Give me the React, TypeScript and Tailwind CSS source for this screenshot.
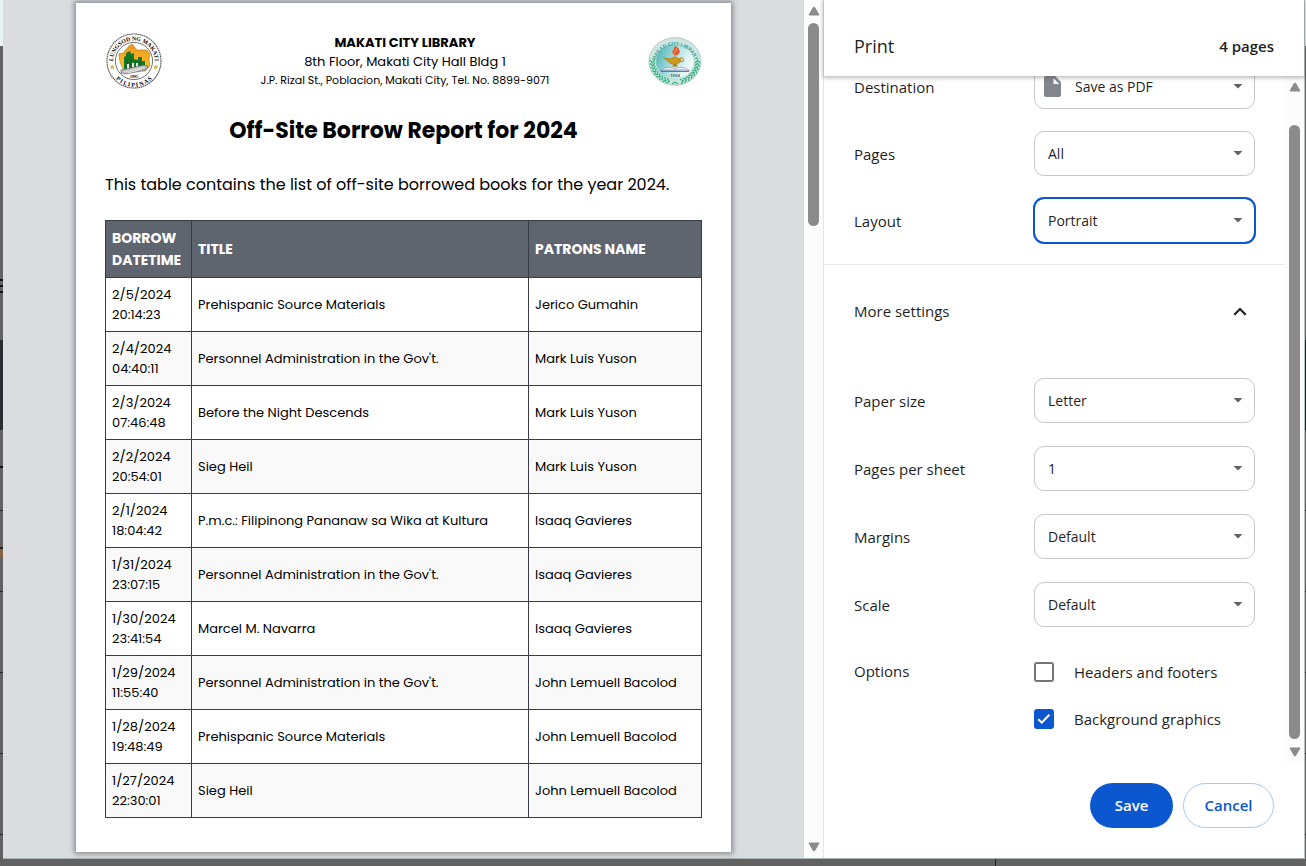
import React, { useState } from "react";

type Borrow = { date: string; time: string; title: string; patron: string };

const borrows: Borrow[] = [
  { date: "2/5/2024", time: "20:14:23", title: "Prehispanic Source Materials", patron: "Jerico Gumahin" },
  { date: "2/4/2024", time: "04:40:11", title: "Personnel Administration in the Gov't.", patron: "Mark Luis Yuson" },
  { date: "2/3/2024", time: "07:46:48", title: "Before the Night Descends", patron: "Mark Luis Yuson" },
  { date: "2/2/2024", time: "20:54:01", title: "Sieg Heil", patron: "Mark Luis Yuson" },
  { date: "2/1/2024", time: "18:04:42", title: "P.m.c.: Filipinong Pananaw sa Wika at Kultura", patron: "Isaaq Gavieres" },
  { date: "1/31/2024", time: "23:07:15", title: "Personnel Administration in the Gov't.", patron: "Isaaq Gavieres" },
  { date: "1/30/2024", time: "23:41:54", title: "Marcel M. Navarra", patron: "Isaaq Gavieres" },
  { date: "1/29/2024", time: "11:55:40", title: "Personnel Administration in the Gov't.", patron: "John Lemuell Bacolod" },
  { date: "1/28/2024", time: "19:48:49", title: "Prehispanic Source Materials", patron: "John Lemuell Bacolod" },
  { date: "1/27/2024", time: "22:30:01", title: "Sieg Heil", patron: "John Lemuell Bacolod" },
];

function CitySeal() {
  return (
    <svg viewBox="-1 0 57 57" className="size-[57px] shrink-0" role="img" aria-label="City seal">
      <defs>
        <path id="seal-top" d="M7.2 31.5A21 21 0 1 1 48.8 31.5" />
        <path id="seal-bottom" d="M3.6 33A24.7 24.7 0 0 0 52.4 33" />
        <linearGradient id="seal-land" x1="0" y1="0" x2="0" y2="1">
          <stop offset="0" stopColor="#f0941c" />
          <stop offset="1" stopColor="#fcca2c" />
        </linearGradient>
      </defs>
      <circle cx="28" cy="28" r="27" fill="#fff" stroke="#555" strokeWidth="1.1" strokeDasharray="1.6 .5" />
      <circle cx="28" cy="28" r="18.6" fill="#fff" stroke="#333" strokeWidth=".7" />
      <path d="M13 21l4-1 6-7 3-2 5 6 10 0 3 4-1 5 1 7-5 5-21 0-4-9-1-6z" fill="url(#seal-land)" stroke="#8b6a20" strokeWidth=".5" />
      <path d="M18 24l2-1v-3l4-2 1 3 3-1v6l4 1v-3l4 0v4l3 0v6l-21 3z" fill="#147a2a" />
      <path d="M21 26v10M25 24v12M30 28v8M34 28v7" stroke="#0a4a16" strokeWidth=".8" />
      <path d="M21 31h2v6h-2zM26 30h2v6h-2zM30 30h2v5h-2z" fill="#f2f2ea" />
      <path d="M15 37l23-5 4 1-2 4-20 4-5-1z" fill="#bbb" stroke="#555" strokeWidth=".6" />
      <path d="M18 39l21-5M22 40l14-4" stroke="#eee" strokeWidth=".8" />
      <path d="M6.3 32.2l.6 1.2 1.3.1-1 .9.3 1.3-1.2-.7-1.2.7.3-1.3-1-.9 1.3-.1zM49.7 32.2l.6 1.2 1.3.1-1 .9.3 1.3-1.2-.7-1.2.7.3-1.3-1-.9 1.3-.1z" fill="#e5c22f" stroke="#b9961c" strokeWidth=".5" />
      <text fontSize="4" fontWeight="700" textAnchor="middle" x="28" y="44.6" fontFamily="Liberation Serif, serif">1995</text>
      <text fontSize="5.8" fontWeight="700" textAnchor="middle" fontFamily="Liberation Serif, serif">
        <textPath href="#seal-top" startOffset="50%">LUNGSOD NG MAKATI</textPath>
      </text>
      <text fontSize="6" fontWeight="700" textAnchor="middle" fontFamily="Liberation Serif, serif">
        <textPath href="#seal-bottom" startOffset="50%">P I L I P I N A S</textPath>
      </text>
    </svg>
  );
}

// Leaf positions follow the lower rim of the badge, as angles in degrees.
const leafAngles = [0, 9, 18, 27, 36, 45, 54, 63, 72];

function LibrarySeal() {
  const leaves = leafAngles.flatMap((a) => [a, 180 - a]);
  return (
    <svg viewBox="0 0 54 50" className="h-[50px] w-[54px] shrink-0" role="img" aria-label="Library seal">
      <defs>
        <path id="lib-top" d="M7.2 23A20.4 19.3 0 0 1 46.8 23" />
        <linearGradient id="lib-disc" x1="0" y1="0" x2="1" y2=".4">
          <stop offset="0" stopColor="#3fadae" />
          <stop offset=".6" stopColor="#b5e3e3" />
          <stop offset="1" stopColor="#f4fbfb" />
        </linearGradient>
      </defs>
      <ellipse cx="27" cy="24.5" rx="26" ry="23.8" fill="#cde6e2" stroke="#b9c8c6" strokeWidth="1" />
      <ellipse cx="27" cy="24.5" rx="19" ry="17.6" fill="url(#lib-disc)" stroke="#8fcfcb" strokeWidth=".5" />
      {leaves.map((a) => {
        const r = (a * Math.PI) / 180;
        const x = 27 + 22.6 * Math.cos(r);
        const y = 24.5 + 20.6 * Math.sin(r);
        return (
          <g key={a} transform={`translate(${x} ${y}) rotate(${a})`}>
            <path d="M-2.4 1.5L0 -1.3L2.4 1.5" fill="none" stroke="#35b380" strokeWidth="1.3" />
          </g>
        );
      })}
      <path d="M24 47l3-1.8 3 1.8" fill="none" stroke="#35b380" strokeWidth="1.1" />
      <path d="M27 18.5c-4-2-3-5-1-6-1-2 1-3 2-4 0 2 3 2 3 4s1 1 1 1c0 3-2 5-5 5z" fill="#df5f33" />
      <path d="M26 17c0-3 3-3 3-6" fill="none" stroke="#f7a36f" strokeWidth=".8" />
      <path d="M15 20.5c4 1 6 1 8 1l4-2 4 2 2 1c0 3-3 4-4 5h-4c-4-1-5-4-10-7z" fill="#cf9a1c" stroke="#946808" strokeWidth=".4" />
      <circle cx="33.5" cy="22.8" r="2" fill="none" stroke="#b78212" strokeWidth="1" />
      <path d="M24 29.5l3-2.5 3 2.5z" fill="#a5700d" />
      <path d="M12.5 33.5c6-4 11-4 14.500-1 4-3 9-3 14.500 1-6-1-11-1-14.500 0-4-1-9-1-14.500 0z" fill="#f5f3fb" stroke="#7b6fa8" strokeWidth=".5" />
      <path d="M13 34.300h28" stroke="#4c62ad" strokeWidth="1.1" />
      <text x="27" y="40" fontSize="4.300" fontWeight="700" textAnchor="middle" fill="#50686b" fontFamily="Liberation Sans, sans-serif">1994</text>
      <text fontSize="4.800" fontWeight="700" textAnchor="middle" fill="#3a9f90" fontFamily="Liberation Sans, sans-serif">
        <textPath href="#lib-top" startOffset="50%">MAKATI CITY LIBRARY</textPath>
      </text>
    </svg>
  );
}

function ScrollArrow({ down = false }: { down?: boolean }) {
  return (
    <svg viewBox="0 0 12 10" className="h-2.5 w-3 shrink-0" aria-hidden="true">
      <path
        d={down ? "M1 1h10L6.7 8.6Q6 9.5 5.3 8.6Z" : "M1 9h10L6.7 1.4Q6 .5 5.3 1.4Z"}
        fill="#8b8b8b"
        stroke="#8b8b8b"
        strokeLinejoin="round"
      />
    </svg>
  );
}

function ReportPage() {
  return (
    <article className="mx-auto mt-[3px] mb-1.5 flex w-full max-w-[655px] flex-col bg-white px-[29px] pt-[30px] pb-[34px] font-[Poppins,Inter,sans-serif] text-black shadow-[0_0_5px_2px_rgba(60,64,67,0.5)]">
      <header className="flex items-center justify-between">
        <CitySeal />
        <div className="text-center leading-[19px]">
          <p className="text-[13px] font-bold">MAKATI CITY LIBRARY</p>
          <p className="text-[13px]">8th Floor, Makati City Hall Bldg 1</p>
          <p className="text-[11px] leading-[19px]">J.P. Rizal St., Poblacion, Makati City, Tel. No. 8899-9071</p>
        </div>
        <LibrarySeal />
      </header>
      <h1 className="mt-[25px] text-center text-[22px] leading-8 font-bold">Off-Site Borrow Report for 2024</h1>
      <p className="mt-6 text-base leading-7">This table contains the list of off-site borrowed books for the year 2024.</p>
      <table className="mt-[21px] w-full table-fixed border-collapse text-left text-[13px] leading-5">
        <colgroup>
          <col className="w-[86px]" />
          <col />
          <col className="w-[173px]" />
        </colgroup>
        <thead>
          <tr className="h-[57px] bg-[#5f656f] text-sm leading-[22px] text-white">
            <th className="border border-[#393c46] px-1.5 font-bold">BORROW DATETIME</th>
            <th className="border border-[#393c46] px-1.5 font-bold">TITLE</th>
            <th className="border border-[#393c46] px-1.5 font-bold">PATRONS NAME</th>
          </tr>
        </thead>
        <tbody>
          {borrows.map((b) => (
            <tr key={b.date} className="h-[54px] even:bg-[#f9f9f9]">
              <td className="border border-[#393c46] px-1.5">
                {b.date}
                <br />
                {b.time}
              </td>
              <td className="border border-[#393c46] px-1.5">{b.title}</td>
              <td className="border border-[#393c46] px-1.5">{b.patron}</td>
            </tr>
          ))}
        </tbody>
      </table>
    </article>
  );
}

function SelectRow({
  label,
  options,
  tall = false,
  focused = false,
  icon,
}: {
  label: string;
  options: string[];
  tall?: boolean;
  focused?: boolean;
  icon?: React.ReactNode;
}) {
  const id = label.toLowerCase().replace(/ /g, "-");
  return (
    <div className={`flex items-center pr-[30px] pl-[30px] ${tall ? "h-[68px]" : "h-[67px]"}`}>
      <label htmlFor={id} className="w-[180px] shrink-0 pt-0.5">
        {label}
      </label>
      <div className="relative flex-1">
        <select
          id={id}
          className={`block h-[45px] w-full appearance-none rounded-[10px] border bg-white pr-8 text-[14px] ${icon ? "pl-10" : "pl-[13px]"} ${
            focused ? "border-[#0b57d0] outline-2 -outline-offset-1 outline-[#0b57d0]" : "border-[#c7c7c7] outline-none"
          }`}
        >
          {options.map((o) => (
            <option key={o}>{o}</option>
          ))}
        </select>
        {icon}
        <svg viewBox="0 0 10 5" className="pointer-events-none absolute top-5 right-3 h-[5px] w-2.5" aria-hidden="true">
          <path d="M.5 0h9L5 4.6z" fill="#5f6368" />
        </svg>
      </div>
    </div>
  );
}

const fileIcon = (
  <svg viewBox="0 0 17 21" className="pointer-events-none absolute top-3 left-2.5 h-[21px] w-[17px]" aria-hidden="true">
    <path d="M2 0h9l6 6v13a2 2 0 0 1-2 2H2a2 2 0 0 1-2-2V2a2 2 0 0 1 2-2zm7.500 2v6h5.700z" fill="#80868b" fillRule="evenodd" />
  </svg>
);

function Tick({ label, checked, onChange }: { label: string; checked: boolean; onChange: () => void }) {
  return (
    <label className="flex h-[47px] items-center gap-5">
      <span className="relative flex size-5 shrink-0">
        <input
          type="checkbox"
          checked={checked}
          onChange={onChange}
          className="size-5 appearance-none rounded-[3px] border-2 border-[#757575] checked:border-[#0b57d0] checked:bg-[#0b57d0]"
        />
        {checked && (
          <svg viewBox="0 0 20 20" className="pointer-events-none absolute inset-0" fill="none" stroke="#fff" strokeWidth="2" aria-hidden="true">
            <path d="M4.2 10.2l3.6 3.5 7.6-8" />
          </svg>
        )}
      </span>
      <span className="pt-0.5">{label}</span>
    </label>
  );
}

function Settings() {
  const [headers, setHeaders] = useState(false);
  const [graphics, setGraphics] = useState(true);
  return (
    <aside className="flex w-[481px] shrink-0 flex-col border-l border-[#e5e5e5] bg-white font-['Segoe_UI','Open_Sans',sans-serif] text-[15px] text-[#1f1f1f]">
      <header className="relative z-10 flex h-[76px] shrink-0 items-center justify-between bg-white px-[30px] pt-4 shadow-[0_1px_4px_1px_rgba(60,64,67,0.35)]">
        <h2 className="text-lg">Print</h2>
        <span className="font-semibold">4 pages</span>
      </header>
      <div className="flex flex-1 overflow-hidden">
        <div className="flex-1">
          <div className="-mt-[23px]">
            <SelectRow label="Destination" options={["Save as PDF"]} icon={fileIcon} />
            <SelectRow label="Pages" options={["All", "Odd pages only", "Custom"]} />
            <SelectRow label="Layout" options={["Portrait", "Landscape"]} focused />
          </div>
          <button
            type="button"
            aria-expanded="true"
            className="mt-2.5 mb-[9px] flex h-[93px] w-full items-center justify-between border-t border-[#e8e8e8] pr-[38px] pl-[30px]"
          >
            More settings
            <svg viewBox="0 0 14 9" className="h-[9px] w-3.5" fill="none" stroke="#1f1f1f" strokeWidth="2.2" aria-hidden="true">
              <path d="M1.3 7.7L7 2l5.7 5.7" />
            </svg>
          </button>
          <SelectRow label="Paper size" options={["Letter", "A4", "Legal"]} tall />
          <SelectRow label="Pages per sheet" options={["1", "2", "4"]} tall />
          <SelectRow label="Margins" options={["Default", "None", "Minimum"]} tall />
          <SelectRow label="Scale" options={["Default", "Custom"]} tall />
          <fieldset className="flex px-[30px] pt-2.5" aria-labelledby="options-title">
            <span id="options-title" className="flex h-[47px] w-[180px] shrink-0 items-center">
              Options
            </span>
            <div>
              <Tick label="Headers and footers" checked={headers} onChange={() => setHeaders(!headers)} />
              <Tick label="Background graphics" checked={graphics} onChange={() => setGraphics(!graphics)} />
            </div>
          </fieldset>
        </div>
        <div className="flex w-[19px] flex-col items-center bg-[#fcfcfc] py-1.5" aria-hidden="true">
          <ScrollArrow />
          <div className="mt-[33px] mb-2 w-[11px] flex-1 rounded-full bg-[#8b8b8b]" />
          <ScrollArrow down />
        </div>
      </div>
      <footer className="flex justify-end gap-2.5 px-[30px] pt-5 pb-[30px] text-[15px] font-semibold">
        <button type="button" className="h-[45px] w-[83px] rounded-full bg-[#0b57d0] text-white">
          Save
        </button>
        <button type="button" className="h-[45px] w-[91px] rounded-full border border-[#a8c7fa] text-[#0b57d0]">
          Cancel
        </button>
      </footer>
    </aside>
  );
}

export default function App() {
  return (
    <div className="flex min-h-screen flex-col bg-[#626262]">
      <div className="flex flex-1">
        {/* Slice of the dimmed page behind the dialog */}
        <div className="flex w-[3px] shrink-0 flex-col" aria-hidden="true">
          <div className="h-[46px] bg-[#e6f3f1]" />
          <div className="mt-[233px] h-0.5 bg-[#111]" />
          <div className="mt-1 h-0.5 bg-[#111]" />
          <div className="mt-1 h-0.5 bg-[#111]" />
          <div className="mt-[47px] h-[90px] bg-[#292c30]" />
          <div className="mt-9 h-0.5 bg-[#111]" />
          <div className="mt-[42px] h-px bg-[#222]" />
          <div className="mt-9 h-0.5 bg-[#2b2218]" />
          <div className="h-2 bg-[#866444]" />
          <div className="mt-[34px] h-px bg-[#222]" />
          <div className="mt-20 h-px bg-[#222]" />
          <div className="mt-20 h-px bg-[#222]" />
          <div className="mt-20 h-px bg-[#222]" />
        </div>
        <main className="flex min-w-0 flex-1 border-b border-[#a9b3b1] bg-[#dadce0]">
          <div className="flex min-w-0 flex-1">
            <ReportPage />
          </div>
          <div className="flex w-[19px] shrink-0 flex-col items-center bg-[#fcfcfc] py-1.5" aria-hidden="true">
            <ScrollArrow />
            <div className="mt-[7px] mb-auto h-[203px] w-[11px] rounded-full bg-[#8b8b8b]" />
            <ScrollArrow down />
          </div>
          <Settings />
        </main>
        <div className="flex w-0.5 shrink-0 flex-col border-l border-[#b9c4c2]" aria-hidden="true">
          <div className="h-[46px] bg-[#e6f3f1]" />
          <div className="mt-[294px] h-[90px] bg-[#1c1f22]" />
          <div className="mt-20 h-px bg-[#222]" />
          <div className="mt-20 h-px bg-[#222]" />
          <div className="mt-20 h-px bg-[#222]" />
          <div className="mt-20 h-px bg-[#222]" />
          <div className="mt-20 h-px bg-[#222]" />
        </div>
      </div>
      <div className="flex h-[7px] shrink-0 justify-end pr-[310px]" aria-hidden="true">
        <div className="w-px bg-[#222]" />
      </div>
    </div>
  );
}
